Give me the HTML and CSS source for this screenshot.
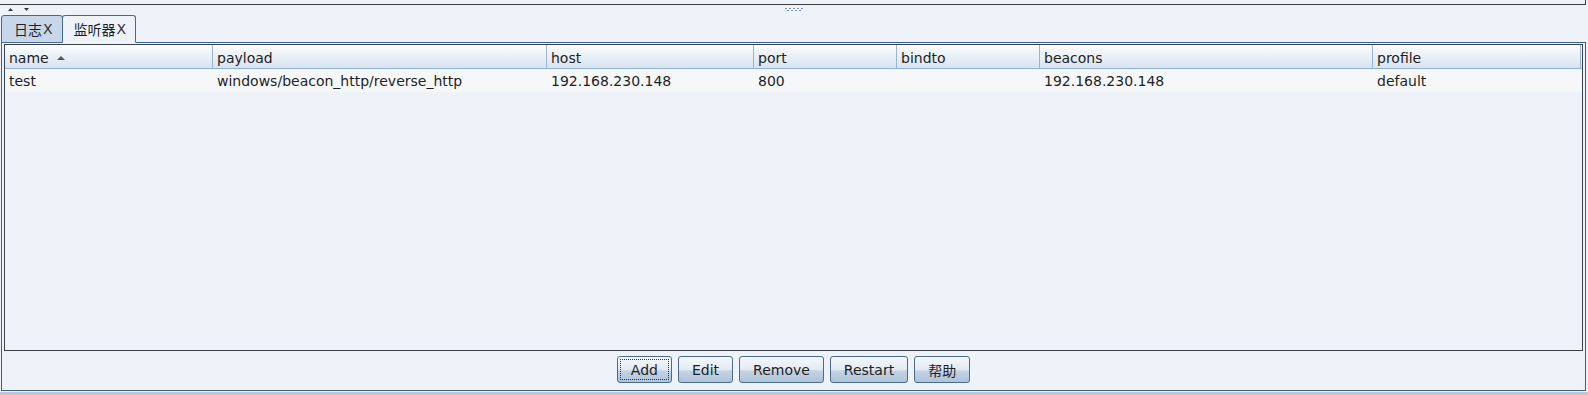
FILE: index.html
```html
<!DOCTYPE html>
<html lang="zh">
<head>
    <meta charset="UTF-8">
    <title>监听器</title>
    <link rel="stylesheet" href="styles.css">
</head>
<body>
    <!-- panneau du haut (replié) -->
    <div class="top-pane"></div>

    <!-- séparateur avec les flèches et la poignée -->
    <div class="divider">
        <div class="arrows">
            <svg width="22" height="4" viewBox="0 0 22 4">
                <polygon points="0,3 2.5,0 5,3" fill="#3a3a3a"/>
                <polygon points="16,0 21,0 18.5,3" fill="#3a3a3a"/>
            </svg>
        </div>
        <div class="grip">
            <svg width="18" height="4" viewBox="0 0 18 4">
                <g fill="#7f92ab">
                    <rect x="0" y="0" width="2" height="1"/>
                    <rect x="4" y="0" width="2" height="1"/>
                    <rect x="8" y="0" width="2" height="1"/>
                    <rect x="12" y="0" width="2" height="1"/>
                    <rect x="16" y="0" width="2" height="1"/>
                    <rect x="2" y="2" width="2" height="1"/>
                    <rect x="6" y="2" width="2" height="1"/>
                    <rect x="10" y="2" width="2" height="1"/>
                    <rect x="14" y="2" width="2" height="1"/>
                </g>
            </svg>
        </div>
        <div></div>
    </div>

    <div class="tab-strip">
        <div class="tab">日志<span class="close">X</span></div>
        <div class="tab active">监听器<span class="close">X</span></div>
    </div>

    <div class="tab-body">
        <div class="scroll">
            <div class="header">
                <div class="cell">name <span class="sort-up"></span></div>
                <div class="cell">payload</div>
                <div class="cell">host</div>
                <div class="cell">port</div>
                <div class="cell">bindto</div>
                <div class="cell">beacons</div>
                <div class="cell">profile</div>
            </div>
            <div class="row">
                <div class="cell">test</div>
                <div class="cell">windows/beacon_http/reverse_http</div>
                <div class="cell">192.168.230.148</div>
                <div class="cell">800</div>
                <div class="cell"></div>
                <div class="cell">192.168.230.148</div>
                <div class="cell">default</div>
            </div>
        </div>

        <div class="buttons">
            <button class="btn focused">Add</button>
            <button class="btn">Edit</button>
            <button class="btn">Remove</button>
            <button class="btn">Restart</button>
            <button class="btn">帮助</button>
        </div>
    </div>

    <div class="status"></div>
</body>
</html>
```

FILE: styles.css
```css
* {
    box-sizing: border-box;
}

body {
    margin: 0;
    width: 1588px;
    height: 395px;
    overflow: hidden;
    background-color: #eef3fa;
    font-family: "DejaVu Sans", "Noto Sans CJK SC", sans-serif;
    font-size: 14px;
    color: #1f1f1f;
}

.top-pane {
    width: 1586px;
    height: 5px;
    border-bottom: 1px solid #3d3d3d;
    border-right: 1px solid #3d3d3d;
}

/* séparateur */
.divider {
    height: 9px;
    display: grid;
    grid-template-columns: 1fr auto 1fr;
    align-items: start;
    padding-top: 2px;
}

.arrows {
    padding-left: 8px;
    line-height: 0;
}

.grip {
    line-height: 0;
}

/* onglets */
.tab-strip {
    display: flex;
    height: 29px;
    padding-top: 1px;
    padding-left: 1px;
    margin-bottom: -1px;
    position: relative;
    z-index: 1;
}

.tab {
    height: 28px;
    display: flex;
    align-items: center;
    padding: 0 9px 0 12px;
    border: 1px solid #48698c;
    border-radius: 3px 3px 0 0;
    background-color: #c7d7e9;
    color: #1f1f1f;
}

.tab.active {
    margin-left: -1px;
    padding-left: 11px;
    background-color: #eef3fa;
    border-bottom-color: #eef3fa;
}

.close {
    margin-left: 1px;
    color: #333;
}

.tab-body {
    margin-left: 1px;
    width: 1585px;
    height: 349px;
    border: 1px solid #36608a;
    padding: 1px 2px 0;
    display: flex;
    flex-direction: column;
}

/* table */
.scroll {
    height: 307px;
    border: 1px solid #3b4148;
    background-color: #eef3fa;
}

.header,
.row {
    display: grid;
    grid-template-columns: 208px 334px 207px 143px 143px 333px 208px;
}

.header {
    height: 24px;
    border-bottom: 1px solid #8fb1d4;
    background: linear-gradient(#fbfcfe, #d8e4f1);
}

.header .cell {
    border-right: 1px solid #96b6d6;
    padding: 2px 0 0 4px;
    display: flex;
    align-items: center;
    color: #222;
}

.sort-up {
    width: 0;
    height: 0;
    margin-left: 8px;
    border-left: 4px solid transparent;
    border-right: 4px solid transparent;
    border-bottom: 4px solid #555;
}

.row {
    height: 23px;
    background-color: #f6f7f9;
}

.row .cell {
    padding: 1px 0 0 4px;
    display: flex;
    align-items: center;
    white-space: nowrap;
}

/* boutons */
.buttons {
    flex: 1;
    display: flex;
    justify-content: center;
    align-items: flex-start;
    gap: 6px;
    padding-top: 5px;
}

.btn {
    height: 27px;
    padding: 0 13px;
    border: 1px solid #4b6b8e;
    border-radius: 3px;
    background: linear-gradient(#f5f8fb 0%, #e3eaf3 50%, #c4d3e4 56%, #aec3da 100%);
    font: inherit;
    color: #1f1f1f;
}

.btn.focused {
    outline: 1px dotted #2b3440;
    outline-offset: -4px;
}

.status {
    height: 3px;
    margin-top: 1px;
    background-color: #c6c6c6;
}
```
